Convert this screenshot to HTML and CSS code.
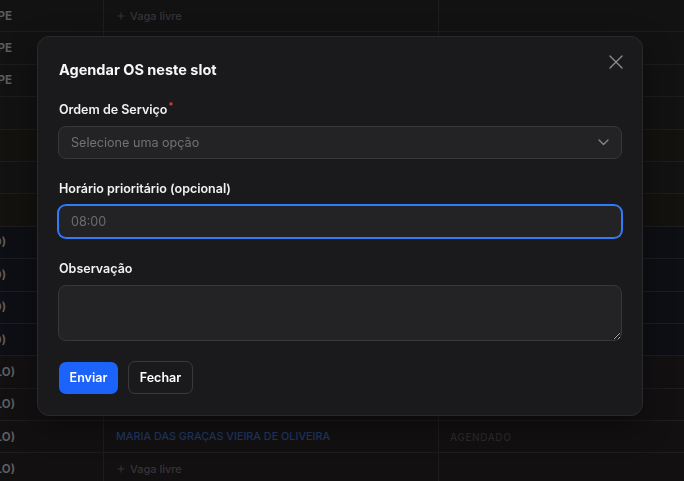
FILE: index.html
```html
<!DOCTYPE html>
<html lang="pt-BR">
<head>
<meta charset="utf-8">
<title>Agendar OS</title>
<link rel="stylesheet" href="styles.css">
</head>
<body>
<div class="table">
  <div class="row"><div class="c1 e12"><span>RECIFE - PE</span></div><div class="c2"><span class="add"><svg width="8" height="8" viewBox="0 0 8 8"><path d="M4 0.5V7.5M0.5 4H7.5" stroke="currentColor" stroke-width="1"/></svg>Vaga livre</span></div><div class="c3"></div></div>
  <div class="row"><div class="c1 e12"><span>OLINDA - PE</span></div><div class="c2"></div><div class="c3"></div></div>
  <div class="row"><div class="c1 e12"><span>PAULISTA - PE</span></div><div class="c2"></div><div class="c3"></div></div>
  <div class="row"><div class="c1"></div><div class="c2"></div><div class="c3"></div></div>
  <div class="row amber"><div class="c1"></div><div class="c2"></div><div class="c3"></div></div>
  <div class="row"><div class="c1"></div><div class="c2"></div><div class="c3"></div></div>
  <div class="row amber"><div class="c1"></div><div class="c2"></div><div class="c3"></div></div>
  <div class="row blue"><div class="c1 e6"><span>(TURNO NOVO)</span></div><div class="c2"></div><div class="c3"></div></div>
  <div class="row blue"><div class="c1 e6"><span>(TURNO NOVO)</span></div><div class="c2"></div><div class="c3"></div></div>
  <div class="row blue"><div class="c1 e6"><span>(TURNO NOVO)</span></div><div class="c2"></div><div class="c3"></div></div>
  <div class="row blue"><div class="c1 e6"><span>(TURNO NOVO)</span></div><div class="c2"></div><div class="c3"></div></div>
  <div class="row rose"><div class="c1 e15"><span>(SÃO PAULO)</span></div><div class="c2"></div><div class="c3"></div></div>
  <div class="row rose"><div class="c1 e15"><span>(SÃO PAULO)</span></div><div class="c2"></div><div class="c3"></div></div>
  <div class="row rose"><div class="c1 e15"><span>(SÃO PAULO)</span></div><div class="c2"><span class="name">MARIA DAS GRAÇAS VIEIRA DE OLIVEIRA</span></div><div class="c3"><span class="status">AGENDADO</span></div></div>
  <div class="row rose"><div class="c1 e15"><span>(SÃO PAULO)</span></div><div class="c2"><span class="add"><svg width="8" height="8" viewBox="0 0 8 8"><path d="M4 0.5V7.5M0.5 4H7.5" stroke="currentColor" stroke-width="1"/></svg>Vaga livre</span></div><div class="c3"></div></div>
</div>

<div class="backdrop">
  <div class="modal">
    <div class="modal-head">
      <h2 class="title">Agendar OS neste slot</h2>
      <button class="close" type="button" aria-label="Fechar">
        <svg width="14" height="14" viewBox="0 0 14 14"><path d="M1 1L13 13M13 1L1 13" stroke="currentColor" stroke-width="1.4" stroke-linecap="round"/></svg>
      </button>
    </div>

    <div class="field">
      <label class="label">Ordem de Serviço<span class="req">*</span></label>
      <div class="select-wrap">
        <select class="control select">
          <option>Selecione uma opção</option>
        </select>
        <svg class="chev" width="11" height="7" viewBox="0 0 11 7"><path d="M1 1L5.5 5.5L10 1" fill="none" stroke="currentColor" stroke-width="1.4" stroke-linecap="round" stroke-linejoin="round"/></svg>
      </div>
    </div>

    <div class="field">
      <label class="label">Horário prioritário (opcional)</label>
      <input class="control focus" type="text" placeholder="08:00">
    </div>

    <div class="field">
      <label class="label">Observação</label>
      <textarea class="control area"></textarea>
    </div>

    <div class="actions">
      <button class="btn primary" type="button">Enviar</button>
      <button class="btn ghost" type="button">Fechar</button>
    </div>
  </div>
</div>
</body>
</html>
```

FILE: styles.css
```css
* { box-sizing: border-box; }

html, body {
  margin: 0;
  padding: 0;
  width: 684px;
  height: 481px;
  overflow: hidden;
  background: #121213;
  font-family: Inter, "Noto Sans", sans-serif;
}

.table {
  display: flex;
  flex-direction: column;
}

.row {
  display: grid;
  grid-template-columns: 104px 335px 1fr;
  height: 32.4px;
  border-bottom: 1px solid #1d1d1f;
  background: #121213;
}
.row.amber { background: #13120f; }
.row.blue { background: #0e0f14; }
.row.rose { background: #131012; }

.c1, .c2, .c3 {
  display: flex;
  align-items: center;
  overflow: hidden;
  white-space: nowrap;
}
.c1 {
  border-right: 1px solid #1d1d1f;
  justify-content: flex-end;
  font-size: 11.5px;
  font-weight: 700;
  color: #5c5c60;
}
.c1.e12 { padding-right: 91px; }
.c1.e6 { padding-right: 97px; }
.c1.e15 { padding-right: 88px; }

.c2 {
  border-right: 1px solid #1d1d1f;
  padding-left: 12px;
}
.c3 { padding-left: 11px; }

.add {
  display: flex;
  align-items: center;
  gap: 5px;
  font-size: 11px;
  font-weight: 500;
  color: #353537;
}
.add svg { display: block; margin-left: 1px; }

.name {
  font-size: 10.8px;
  font-weight: 500;
  color: #1e3861;
}
.status {
  font-size: 10px;
  font-weight: 500;
  letter-spacing: 0.6px;
  color: #2a292c;
}

.backdrop {
  position: fixed;
  inset: 0;
  padding: 36px 0 0 37px;
}

.modal {
  width: 606px;
  background: #1a1a1c;
  border: 1px solid #2a2a2d;
  border-radius: 12px;
  padding: 21px 20px;
  box-shadow: 0 10px 30px rgba(0, 0, 0, 0.4);
  display: flex;
  flex-direction: column;
}

.modal-head {
  display: flex;
  justify-content: space-between;
  align-items: flex-start;
  margin-bottom: 20px;
}
.title {
  margin: 0 0 0 1px;
  font-size: 14.5px;
  line-height: 21px;
  font-weight: 700;
  color: #f7f7f8;
  padding-top: 1px;
}
.close {
  margin: -3px -1px 0 0;
  padding: 0;
  border: 0;
  background: none;
  color: #8b8b90;
  width: 14px;
  height: 14px;
  display: flex;
}

.field {
  display: flex;
  flex-direction: column;
  gap: 6px;
  margin-bottom: 20px;
}
.field:nth-of-type(3) { margin-bottom: 21px; }

.label {
  font-size: 12.5px;
  line-height: 20px;
  font-weight: 600;
  color: #f1f1f2;
  padding-left: 1px;
}
.req {
  color: #ef4444;
  font-size: 9px;
  vertical-align: top;
  line-height: 12px;
  margin-left: 1px;
}

.control {
  width: 100%;
  height: 33px;
  border: 1px solid #38383b;
  border-radius: 8px;
  background: #232325;
  color: #e5e5e7;
  font-family: Inter, "Noto Sans", sans-serif;
  font-size: 12.6px;
  padding: 0 12px;
  outline: none;
}
.control::placeholder { color: #6d6d71; }

.select-wrap { position: relative; }
.select {
  appearance: none;
  -webkit-appearance: none;
  color: #727276;
}
.chev {
  position: absolute;
  right: 13px;
  top: 13px;
  color: #85858a;
}

.focus {
  border-color: #2f7cf6;
  box-shadow: 0 0 0 1px #2f7cf6;
}

.area {
  height: 56px;
  padding: 8px 12px;
  resize: vertical;
  color-scheme: dark;
}

.actions {
  display: flex;
  gap: 10px;
  align-items: center;
}
.btn {
  font-family: Inter, "Noto Sans", sans-serif;
  font-size: 12.5px;
  font-weight: 600;
  border-radius: 7px;
  height: 32px;
  color: #ffffff;
}
.primary {
  width: 59px;
  margin-left: 1px;
  background: #1c63fb;
  border: 0;
}
.ghost {
  width: 65px;
  height: 33px;
  background: transparent;
  border: 1px solid #3a3a3d;
}
```
